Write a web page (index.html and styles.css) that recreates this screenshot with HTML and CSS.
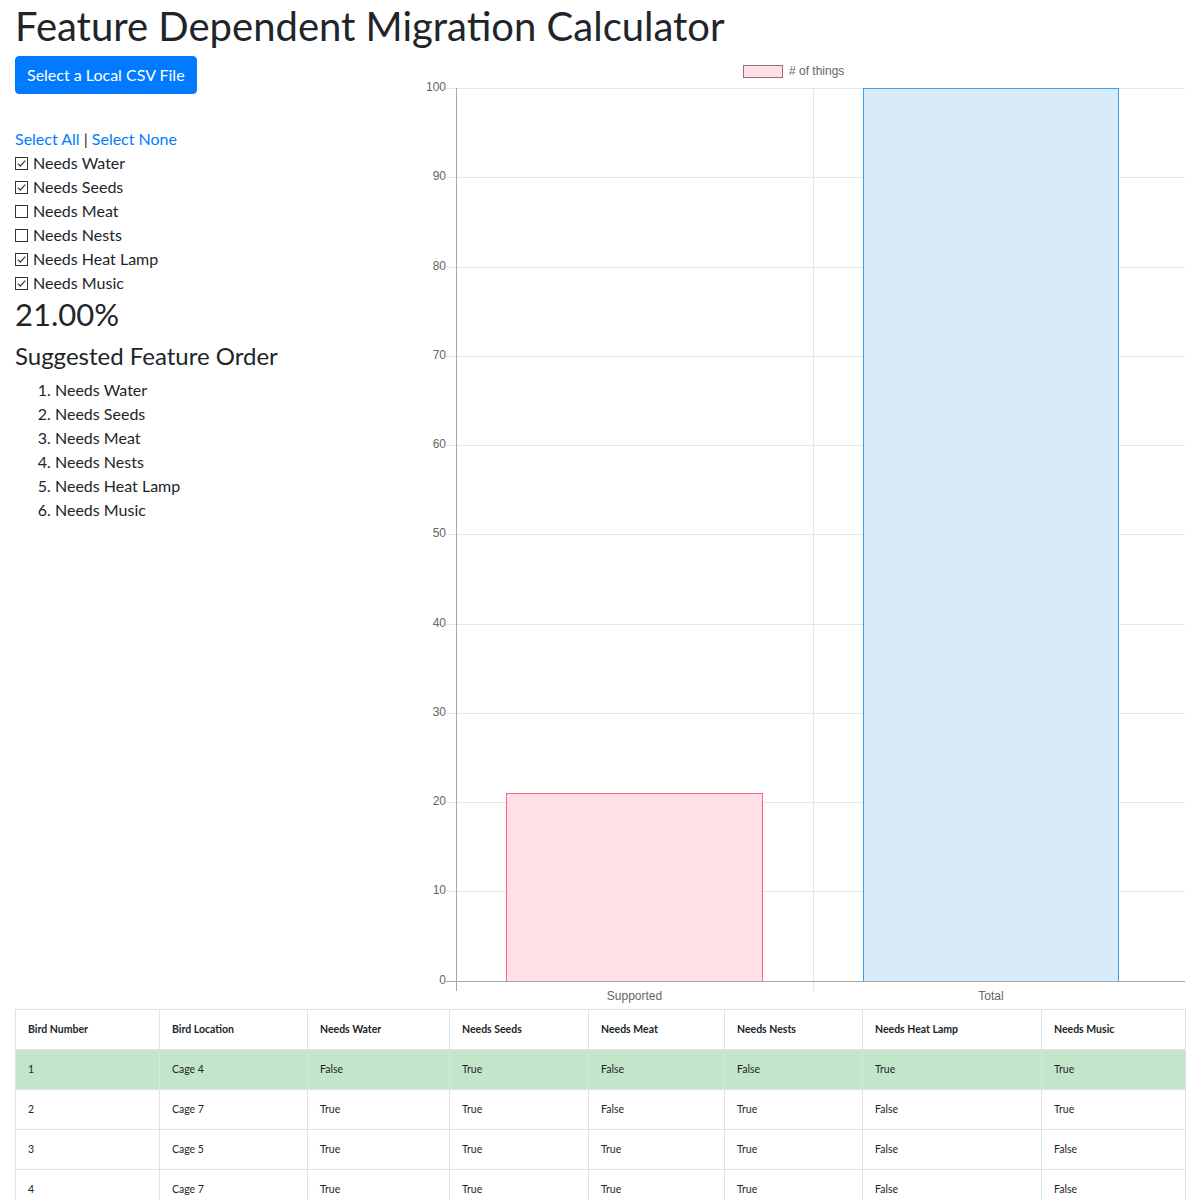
FILE: index.html
```html
<!DOCTYPE html>
<html lang="en">
<head>
<meta charset="utf-8">
<title>Feature Dependent Migration Calculator</title>
<link rel="stylesheet" href="styles.css">
</head>
<body>
<div class="page">
  <h1 class="title">Feature Dependent Migration Calculator</h1>
  <div class="main">
    <div class="left">
      <button class="btn">Select a Local CSV File</button>
      <div class="select-links"><a href="#">Select All</a> | <a href="#">Select None</a></div>
      <ul class="checks">
        <li><span class="cb"><svg viewBox="0 0 13 13" width="13" height="13"><rect x="0.5" y="0.5" width="12" height="12" fill="#fff" stroke="#333"/><path d="M2.8 6.6 L5.3 9.1 L10.3 3.6" fill="none" stroke="#333" stroke-width="1.2"/></svg></span>Needs Water</li>
        <li><span class="cb"><svg viewBox="0 0 13 13" width="13" height="13"><rect x="0.5" y="0.5" width="12" height="12" fill="#fff" stroke="#333"/><path d="M2.8 6.6 L5.3 9.1 L10.3 3.6" fill="none" stroke="#333" stroke-width="1.2"/></svg></span>Needs Seeds</li>
        <li><span class="cb"><svg viewBox="0 0 13 13" width="13" height="13"><rect x="0.5" y="0.5" width="12" height="12" fill="#fff" stroke="#333"/></svg></span>Needs Meat</li>
        <li><span class="cb"><svg viewBox="0 0 13 13" width="13" height="13"><rect x="0.5" y="0.5" width="12" height="12" fill="#fff" stroke="#333"/></svg></span>Needs Nests</li>
        <li><span class="cb"><svg viewBox="0 0 13 13" width="13" height="13"><rect x="0.5" y="0.5" width="12" height="12" fill="#fff" stroke="#333"/><path d="M2.8 6.6 L5.3 9.1 L10.3 3.6" fill="none" stroke="#333" stroke-width="1.2"/></svg></span>Needs Heat Lamp</li>
        <li><span class="cb"><svg viewBox="0 0 13 13" width="13" height="13"><rect x="0.5" y="0.5" width="12" height="12" fill="#fff" stroke="#333"/><path d="M2.8 6.6 L5.3 9.1 L10.3 3.6" fill="none" stroke="#333" stroke-width="1.2"/></svg></span>Needs Music</li>
      </ul>
      <h2 class="percent">21.00%</h2>
      <h4 class="order-title">Suggested Feature Order</h4>
      <ol class="order">
        <li>Needs Water</li>
        <li>Needs Seeds</li>
        <li>Needs Meat</li>
        <li>Needs Nests</li>
        <li>Needs Heat Lamp</li>
        <li>Needs Music</li>
      </ol>
    </div>
    <div class="right">
      <svg class="chart" width="770" height="953" viewBox="0 0 770 953">
        <g class="legend">
          <rect x="328.5" y="9.5" width="39" height="12" fill="#ffe0e6" stroke="#8f7177" stroke-width="1"/>
          <text x="374" y="15.5"># of things</text>
        </g>
        <g class="grid" stroke="#e6e6e6" stroke-width="1">
          <line x1="31" y1="32.5" x2="770" y2="32.5"/>
          <line x1="31" y1="121.5" x2="770" y2="121.5"/>
          <line x1="31" y1="211.5" x2="770" y2="211.5"/>
          <line x1="31" y1="300.5" x2="770" y2="300.5"/>
          <line x1="31" y1="389.5" x2="770" y2="389.5"/>
          <line x1="31" y1="478.5" x2="770" y2="478.5"/>
          <line x1="31" y1="568.5" x2="770" y2="568.5"/>
          <line x1="31" y1="657.5" x2="770" y2="657.5"/>
          <line x1="31" y1="746.5" x2="770" y2="746.5"/>
          <line x1="31" y1="835.5" x2="770" y2="835.5"/>
          <line x1="398.5" y1="32" x2="398.5" y2="935"/>
        </g>
        <rect x="91.5" y="737.5" width="256" height="188" fill="#ffe0e6" stroke="#ff6384" stroke-width="1"/>
        <rect x="448.5" y="32.5" width="255" height="893" fill="#d7ebfa" stroke="#36a2eb" stroke-width="1"/>
        <g stroke="#a6a6a6" stroke-width="1">
          <line x1="41.5" y1="32" x2="41.5" y2="935"/>
          <line x1="31" y1="925.5" x2="770" y2="925.5"/>
        </g>
        <g class="ylabels">
          <text x="31" y="32">100</text>
          <text x="31" y="121">90</text>
          <text x="31" y="211">80</text>
          <text x="31" y="300">70</text>
          <text x="31" y="389">60</text>
          <text x="31" y="478">50</text>
          <text x="31" y="568">40</text>
          <text x="31" y="657">30</text>
          <text x="31" y="746">20</text>
          <text x="31" y="835">10</text>
          <text x="31" y="925">0</text>
        </g>
        <g class="xlabels">
          <text x="219.5" y="940.5">Supported</text>
          <text x="576" y="940.5">Total</text>
        </g>
      </svg>
    </div>
  </div>
  <table class="data">
    <colgroup>
      <col class="c1"><col class="c2"><col class="c3"><col class="c4"><col class="c5"><col class="c6"><col class="c7"><col class="c8">
    </colgroup>
    <thead>
      <tr><th>Bird Number</th><th>Bird Location</th><th>Needs Water</th><th>Needs Seeds</th><th>Needs Meat</th><th>Needs Nests</th><th>Needs Heat Lamp</th><th>Needs Music</th></tr>
    </thead>
    <tbody>
      <tr class="ok"><td>1</td><td>Cage 4</td><td>False</td><td>True</td><td>False</td><td>False</td><td>True</td><td>True</td></tr>
      <tr><td>2</td><td>Cage 7</td><td>True</td><td>True</td><td>False</td><td>True</td><td>False</td><td>True</td></tr>
      <tr><td>3</td><td>Cage 5</td><td>True</td><td>True</td><td>True</td><td>True</td><td>False</td><td>False</td></tr>
      <tr><td>4</td><td>Cage 7</td><td>True</td><td>True</td><td>True</td><td>True</td><td>False</td><td>False</td></tr>
    </tbody>
  </table>
</div>
</body>
</html>
```

FILE: styles.css
```css
* { box-sizing: border-box; }
html, body { margin: 0; padding: 0; background: #fff; }
body {
  font-family: Lato, "Noto Sans", sans-serif;
  font-size: 16px;
  line-height: 24px;
  color: #212529;
}
.page { padding: 0 15px; }
.title {
  margin: 0 0 8px;
  font-size: 40px;
  line-height: 48px;
  font-weight: 400;
  padding-top: 2px;
  height: 48px;
}
.main { display: flex; }
.left { width: 385px; flex: none; }
.right { flex: 1; padding-left: 15px; }
.chart { display: block; }
.btn {
  display: inline-block;
  font-family: inherit;
  font-size: 16px;
  line-height: 24px;
  padding: 6px 11px;
  color: #fff;
  background: #007bff;
  border: 1px solid #007bff;
  border-radius: 4px;
}
.select-links { margin-top: 33px; }
.select-links a { color: #007bff; text-decoration: none; }
.checks { list-style: none; margin: 0; padding: 0; }
.checks li { display: flex; align-items: center; height: 24px; }
.cb { display: inline-flex; width: 18px; }
.cb svg { display: block; }
.percent {
  margin: 0 0 8px;
  font-size: 31px;
  line-height: 38px;
  font-weight: 400;
}
.order-title {
  margin: 0 0 8px;
  font-size: 24px;
  line-height: 29px;
  font-weight: 400;
}
.order { margin: 0; padding-left: 40px; }
.chart text {
  font-family: "Liberation Sans", Arial, sans-serif;
  font-size: 12px;
  fill: #666;
}
.legend text { dominant-baseline: middle; }
.ylabels text { text-anchor: end; dominant-baseline: middle; }
.xlabels text { text-anchor: middle; dominant-baseline: middle; }
.data {
  width: 1170px;
  border-collapse: collapse;
  table-layout: fixed;
  font-size: 10.5px;
  line-height: 15px;
  color: #212529;
}
.c1 { width: 144px; }
.c2 { width: 148px; }
.c3 { width: 142px; }
.c4 { width: 139px; }
.c5 { width: 136px; }
.c6 { width: 138px; }
.c7 { width: 179px; }
.c8 { width: 144px; }
.data th, .data td {
  border: 1px solid #dee2e6;
  padding: 12px;
  text-align: left;
  vertical-align: middle;
}
.data th { font-weight: 700; }
.data tr.ok td { background: #c3e6cb; }
```
